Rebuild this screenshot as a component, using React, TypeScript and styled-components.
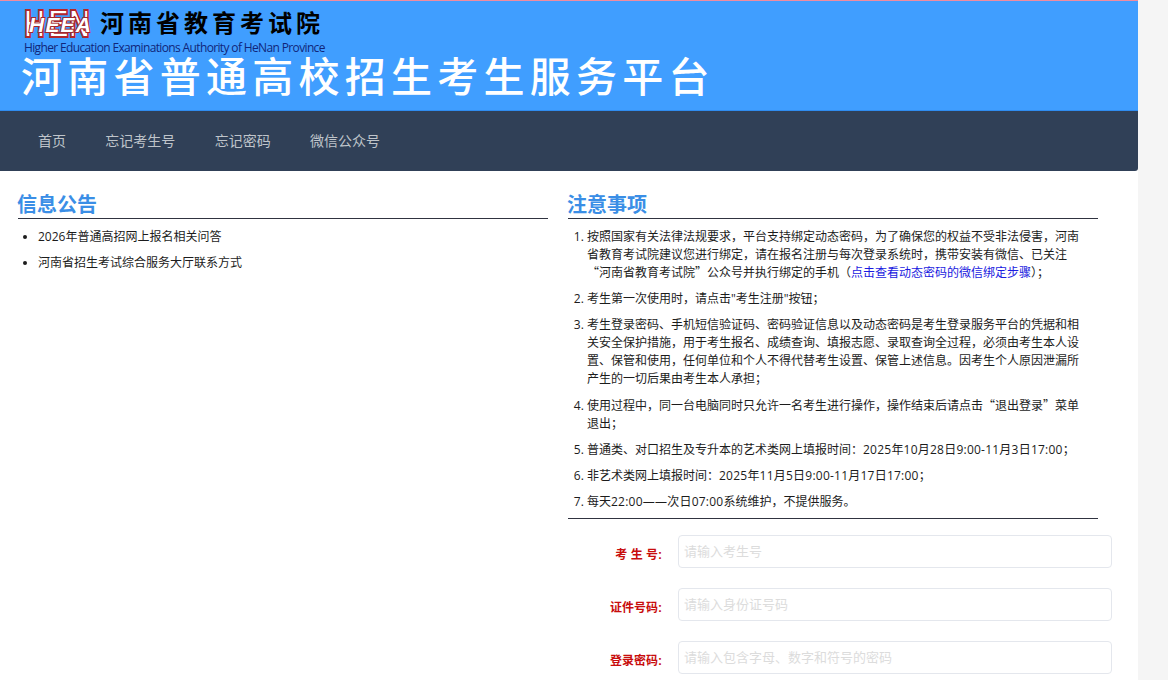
import React from "react";
import styled, { createGlobalStyle } from "styled-components";

const GlobalStyle = createGlobalStyle`
  html, body {
    margin: 0;
    height: 100%;
    overflow: hidden;
    background: #f5f5f5;
    font-family: "Liberation Sans", "Noto Sans CJK SC", sans-serif;
  }
`;

const Page = styled.div`
  width: 1138px;
  height: 680px;
  background: #fff;
  overflow: hidden;
`;

const Banner = styled.header`
  height: 110px;
  box-sizing: border-box;
  background: #409eff;
  border-top: 1px solid #f08ca0;
  padding: 6px 0 0 22px;
`;

const BrandRow = styled.div`
  display: flex;
  align-items: center;
  height: 33px;
`;

const BrandName = styled.div`
  margin-left: 6px;
  font-size: 24px;
  line-height: 33px;
  font-weight: 700;
  letter-spacing: 4px;
  color: #000;
  white-space: nowrap;
`;

const BrandEnglish = styled.div`
  margin: 0 0 0 2px;
  font-family: "Open Sans", sans-serif;
  font-size: 12px;
  line-height: 15px;
  letter-spacing: -0.64px;
  color: #10267a;
  white-space: nowrap;
`;

const BannerTitle = styled.h1`
  margin: -2px 0 0 -1px;
  font-size: 41px;
  line-height: 50px;
  font-weight: 500;
  letter-spacing: 5.25px;
  color: #fff;
  white-space: nowrap;
`;

const Nav = styled.nav`
  display: flex;
  height: 61px;
  padding-left: 18.3px;
  background: #304057;
  border-top: 1px solid #2f8cf0;
  box-sizing: border-box;
  border-bottom-right-radius: 3px;
`;

const NavItem = styled.a`
  padding: 0 19.7px;
  font-size: 14px;
  line-height: 60px;
  color: #bfc4ca;
  white-space: nowrap;
`;

const Columns = styled.main`
  display: grid;
  grid-template-columns: 530px 530px;
  column-gap: 20px;
  padding: 21px 0 0 18px;
`;

const SectionTitle = styled.h2`
  margin: 0;
  height: 26px;
  font-size: 20px;
  line-height: 26px;
  font-weight: 700;
  text-indent: -1px;
  color: #3a8ee6;
  border-bottom: 1px solid #303340;
`;

const NoticeList = styled.ul`
  margin: 9px 0 0;
  padding: 0 0 0 20px;
  font-family: "Open Sans", "Noto Sans CJK SC", sans-serif;
  font-size: 12px;
  line-height: 18px;
  color: #1c1c1c;
`;

const NoticeItem = styled.li`
  margin-bottom: 8.2px;
`;

const RuleList = styled.ol`
  margin: 9px 0 0;
  padding: 0 18px 0 19px;
  font-family: "Open Sans", "Noto Sans CJK SC", sans-serif;
  font-size: 12px;
  line-height: 18px;
  color: #1c1c1c;
  border-bottom: 1px solid #303340;
`;

const RuleItem = styled.li`
  margin-bottom: 8.2px;

  &:last-child {
    margin-bottom: 7.2px;
  }
`;

const RuleLink = styled.a`
  color: #1a1ae0;
`;

/* curly quotes are full width in the reference, Open Sans has narrow ones */
const WideQuote = styled.span`
  font-family: "Noto Sans CJK SC", sans-serif;
  line-height: 0;
`;

const DateRun = styled.span`
  letter-spacing: 0.23px;
`;

const LoginForm = styled.form`
  display: flex;
  flex-direction: column;
  gap: 20px;
  margin-top: 16px;
`;

const FormRow = styled.div`
  display: grid;
  grid-template-columns: 94px 434px;
  column-gap: 16px;
  align-items: center;
`;

const FieldLabel = styled.label`
  position: relative;
  top: 2px;
  text-align: right;
  font-size: 12px;
  font-weight: 700;
  color: #c80d0d;
  white-space: pre;
`;

const FieldInput = styled.input`
  box-sizing: border-box;
  width: 100%;
  height: 33px;
  padding: 0 5px;
  border: 1px solid #e4e7ed;
  border-radius: 4px;
  font-size: 13px;
  font-family: inherit;
  outline: none;

  &::placeholder {
    color: #dcdcdc;
  }
`;

function HeeaLogo() {
  const blocks = [
    { letter: "H", x: 2 },
    { letter: "E", x: 26 },
    { letter: "N", x: 47 },
  ];
  return (
    <svg width="72" height="33" viewBox="0 0 72 33" style={{ flex: "none" }}>
      {blocks.map((b) => (
        <text
          key={b.x}
          x={b.x}
          y="30"
          textLength="21"
          lengthAdjust="spacingAndGlyphs"
          fontFamily="Liberation Sans"
          fontWeight="700"
          fontSize="38"
          fill="#fff"
          stroke="#b3262c"
          strokeWidth="2"
        >
          {b.letter}
        </text>
      ))}
      <text
        x="7"
        y="25"
        textLength="62"
        fontFamily="Liberation Sans"
        fontStyle="italic"
        fontWeight="700"
        fontSize="21"
        fill="#fff"
        stroke="#a02a30"
        strokeWidth="2"
        paintOrder="stroke"
      >
        HEEA
      </text>
    </svg>
  );
}

export default function App() {
  return (
    <Page>
      <GlobalStyle />
      <Banner>
        <BrandRow>
          <HeeaLogo />
          <BrandName>河南省教育考试院</BrandName>
        </BrandRow>
        <BrandEnglish>Higher Education Examinations Authority of HeNan Province</BrandEnglish>
        <BannerTitle>河南省普通高校招生考生服务平台</BannerTitle>
      </Banner>
      <Nav>
        <NavItem>首页</NavItem>
        <NavItem>忘记考生号</NavItem>
        <NavItem>忘记密码</NavItem>
        <NavItem>微信公众号</NavItem>
      </Nav>
      <Columns>
        <section>
          <SectionTitle>信息公告</SectionTitle>
          <NoticeList>
            <NoticeItem>2026年普通高招网上报名相关问答</NoticeItem>
            <NoticeItem>河南省招生考试综合服务大厅联系方式</NoticeItem>
          </NoticeList>
        </section>
        <section>
          <SectionTitle>注意事项</SectionTitle>
          <RuleList>
            <RuleItem>
              按照国家有关法律法规要求，平台支持绑定动态密码，为了确保您的权益不受非法侵害，河南省教育考试院建议您进行绑定，请在报名注册与每次登录系统时，携带安装有微信、已关注
              <wbr />
              <WideQuote>“</WideQuote>河南省教育考试院<WideQuote>”</WideQuote>公众号并执行绑定的手机（
              <RuleLink>点击查看动态密码的微信绑定步骤</RuleLink>）；
            </RuleItem>
            <RuleItem>考生第一次使用时，请点击"考生注册"按钮；</RuleItem>
            <RuleItem>
              考生登录密码、手机短信验证码、密码验证信息以及动态密码是考生登录服务平台的凭据和相关安全保护措施，用于考生报名、成绩查询、填报志愿、录取查询全过程，必须由考生本人设置、保管和使用，任何单位和个人不得代替考生设置、保管上述信息。因考生个人原因泄漏所产生的一切后果由考生本人承担；
            </RuleItem>
            <RuleItem>
              使用过程中，同一台电脑同时只允许一名考生进行操作，操作结束后请点击<WideQuote>“</WideQuote>退出登录
              <WideQuote>”</WideQuote>菜单退出；
            </RuleItem>
            <RuleItem>
              普通类、对口招生及专升本的艺术类网上填报时间：<DateRun>2025年10月28日9:00-11月3日17:00</DateRun>；
            </RuleItem>
            <RuleItem>
              非艺术类网上填报时间：<DateRun>2025年11月5日9:00-11月17日17:00</DateRun>；
            </RuleItem>
            <RuleItem>
              每天<DateRun>22:00——次日07:00</DateRun>系统维护，不提供服务。
            </RuleItem>
          </RuleList>
          <LoginForm>
            <FormRow>
              <FieldLabel>考 生 号:</FieldLabel>
              <FieldInput placeholder="请输入考生号" />
            </FormRow>
            <FormRow>
              <FieldLabel>证件号码:</FieldLabel>
              <FieldInput placeholder="请输入身份证号码" />
            </FormRow>
            <FormRow>
              <FieldLabel>登录密码:</FieldLabel>
              <FieldInput placeholder="请输入包含字母、数字和符号的密码" />
            </FormRow>
          </LoginForm>
        </section>
      </Columns>
    </Page>
  );
}
